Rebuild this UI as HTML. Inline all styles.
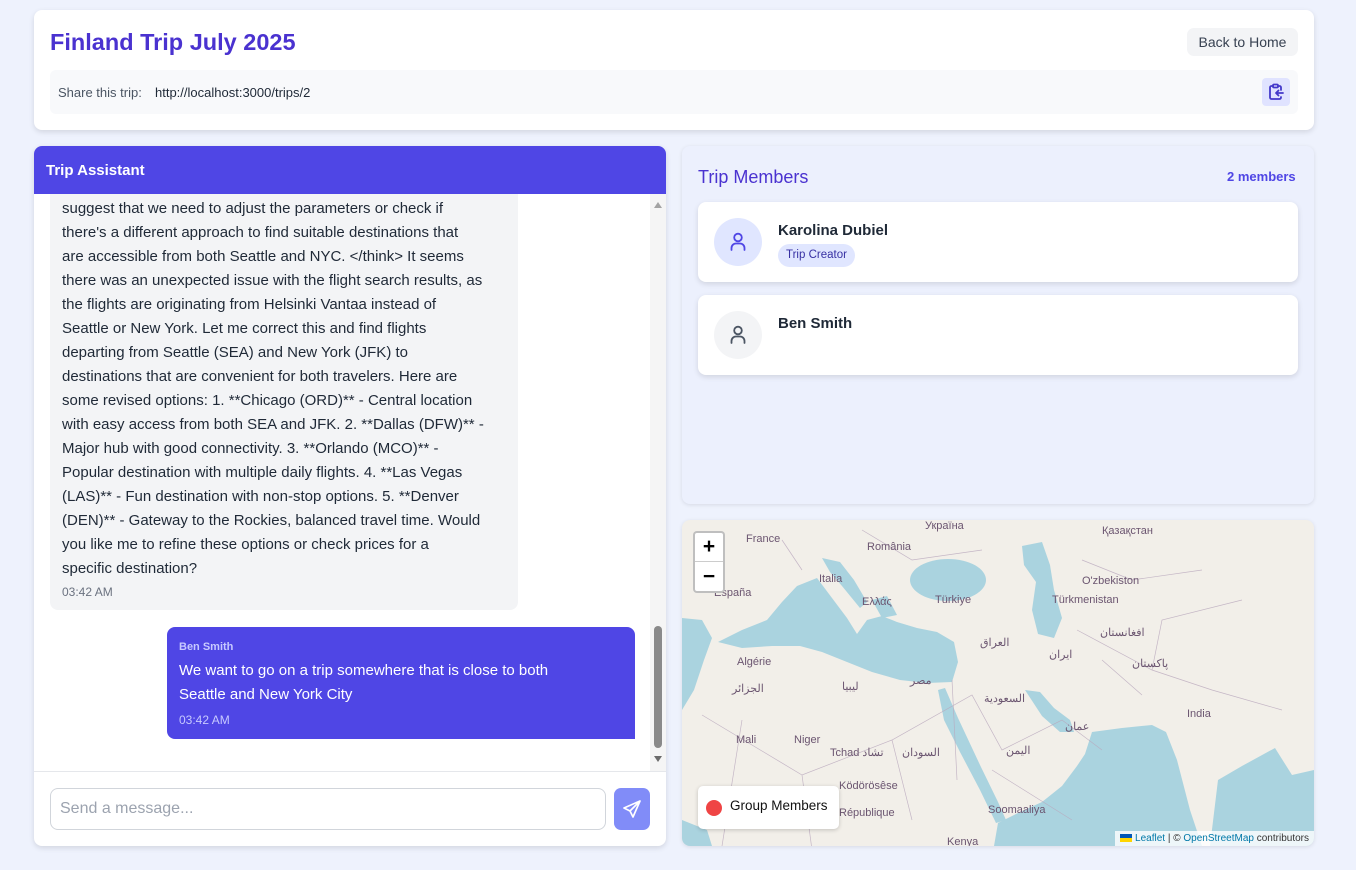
<!DOCTYPE html>
<html><head><meta charset="utf-8"><style>
*{box-sizing:border-box;margin:0;padding:0}
body{width:1356px;height:870px;background:#eef2fd;font-family:"Liberation Sans","Noto Sans CJK SC",sans-serif;position:relative;overflow:hidden;color:#1f2937}
.abs{position:absolute}
.card{background:#fff;border-radius:8px;box-shadow:0 2px 6px rgba(0,0,0,.12)}
.nw{white-space:nowrap}
</style></head><body>
<div class="abs card" style="left:34px;top:10px;width:1280px;height:120px">
  <div class="abs nw" style="left:16px;top:19px;font-size:23.5px;font-weight:bold;color:#4a32d0">Finland Trip July 2025</div>
  <div class="abs nw" style="left:1153px;top:18px;width:111px;height:28px;background:#f3f4f6;border-radius:7px;font-size:14px;color:#374151;line-height:28px;text-align:center">Back to Home</div>
  <div class="abs" style="left:16px;top:60px;width:1248px;height:44px;background:#f8f9fb;border-radius:6px">
    <div class="abs nw" style="left:8px;top:15px;font-size:13px;color:#4b5563">Share this trip:</div>
    <div class="abs nw" style="left:105px;top:15px;font-size:13px;color:#1f2937">http://localhost:3000/trips/2</div>
    <div class="abs" style="left:1212px;top:8px;width:28px;height:28px;background:#e0e3ff;border-radius:4px">
      <svg width="28" height="28" viewBox="0 0 28 28" fill="none" stroke="#4338ca" stroke-width="1.8" stroke-linecap="round" stroke-linejoin="round"><path d="M11 8H9.5A1.5 1.5 0 0 0 8 9.5v10A1.5 1.5 0 0 0 9.5 21h8a1.5 1.5 0 0 0 1.5-1.5V19"/><rect x="11" y="6.5" width="5" height="3" rx="1"/><path d="M16 8h1.5A1.5 1.5 0 0 1 19 9.5V12"/><path d="M21 15h-7m2.5-2.5L14 15l2.5 2.5"/></svg>
    </div>
  </div>
</div>

<div class="abs card" style="left:34px;top:146px;width:632px;height:700px;overflow:hidden">
  <div class="abs" style="left:0;top:0;width:632px;height:48px;background:#4f46e5;color:#fff;font-weight:bold;font-size:15px;padding:16px 12px">Trip Assistant</div>
  <div class="abs" style="left:16px;top:48px;width:468px;height:416px;background:#f3f4f6;border-radius:0 0 8px 8px"></div>
  <div class="abs nw" style="left:28px;top:51px;font-size:15px;line-height:24px;color:#1f2937">suggest that we need to adjust the parameters or check if<br>there's a different approach to find suitable destinations that<br>are accessible from both Seattle and NYC. &lt;/think&gt; It seems<br>there was an unexpected issue with the flight search results, as<br>the flights are originating from Helsinki Vantaa instead of<br>Seattle or New York. Let me correct this and find flights<br>departing from Seattle (SEA) and New York (JFK) to<br>destinations that are convenient for both travelers. Here are<br>some revised options: 1. **Chicago (ORD)** - Central location<br>with easy access from both SEA and JFK. 2. **Dallas (DFW)** -<br>Major hub with good connectivity. 3. **Orlando (MCO)** -<br>Popular destination with multiple daily flights. 4. **Las Vegas<br>(LAS)** - Fun destination with non-stop options. 5. **Denver<br>(DEN)** - Gateway to the Rockies, balanced travel time. Would<br>you like me to refine these options or check prices for a<br>specific destination?</div>
  <div class="abs nw" style="left:28px;top:439px;font-size:12px;color:#6b7280">03:42 AM</div>
  <div class="abs" style="left:133px;top:481px;width:468px;height:112px;background:#4f46e5;border-radius:8px 8px 0 8px;color:#fff">
    <div class="abs nw" style="left:12px;top:14px;font-size:11px;font-weight:bold;color:#c7c9ff">Ben Smith</div>
    <div class="abs nw" style="left:12px;top:32px;font-size:15px;line-height:24px">We want to go on a trip somewhere that is close to both<br>Seattle and New York City</div>
    <div class="abs nw" style="left:12px;top:86px;font-size:12px;color:#c7c9ff">03:42 AM</div>
  </div>
  <div class="abs" style="left:616px;top:48px;width:16px;height:577px;background:#f5f5f5"></div>
  <div class="abs" style="left:620px;top:56px;width:0;height:0;border-left:4px solid transparent;border-right:4px solid transparent;border-bottom:6px solid #a3a3a3"></div>
  <div class="abs" style="left:620px;top:480px;width:8px;height:122px;background:#8a8a8a;border-radius:4px"></div>
  <div class="abs" style="left:620px;top:610px;width:0;height:0;border-left:4px solid transparent;border-right:4px solid transparent;border-top:6px solid #6b6b6b"></div>
  <div class="abs" style="left:0;top:625px;width:632px;height:1px;background:#e5e7eb"></div>
  <div class="abs nw" style="left:16px;top:642px;width:556px;height:42px;border:1px solid #d1d5db;border-radius:8px;font-size:16px;color:#9ca3af;padding:11px 9px">Send a message...</div>
  <div class="abs" style="left:580px;top:642px;width:36px;height:42px;background:#818cf8;border-radius:7px">
    <svg width="36" height="42" viewBox="0 0 36 42" fill="none" stroke="#fff" stroke-width="1.7" stroke-linejoin="round"><path d="M26 13L10 20l6 3 3 6z"/><path d="M26 13L16 23"/></svg>
  </div>
</div>

<div class="abs" style="left:682px;top:146px;width:632px;height:358px;background:#ecf0fd;border-radius:8px;box-shadow:0 1px 4px rgba(0,0,0,.1)">
  <div class="abs nw" style="left:16px;top:21px;font-size:18px;color:#4a32d0">Trip Members</div>
  <div class="abs nw" style="left:545px;top:23px;font-size:13px;font-weight:bold;color:#4f46e5">2 members</div>
  <div class="abs card" style="left:16px;top:56px;width:600px;height:80px">
    <div class="abs" style="left:16px;top:16px;width:48px;height:48px;border-radius:50%;background:#e0e6ff">
      <svg width="48" height="48" viewBox="0 0 48 48" fill="none" stroke="#4f46e5" stroke-width="1.8" stroke-linecap="round"><circle cx="24" cy="19.5" r="3.8"/><path d="M17.5 32v-2a4.5 4.5 0 0 1 4.5-4.5h4a4.5 4.5 0 0 1 4.5 4.5v2"/></svg>
    </div>
    <div class="abs nw" style="left:80px;top:20px;font-size:15px;font-weight:bold;color:#1f2937">Karolina Dubiel</div>
    <div class="abs nw" style="left:80px;top:42px;height:23px;padding:0 8px;line-height:23px;border-radius:12px;background:#e0e6ff;color:#3730a3;font-size:11.5px">Trip Creator</div>
  </div>
  <div class="abs card" style="left:16px;top:149px;width:600px;height:80px">
    <div class="abs" style="left:16px;top:16px;width:48px;height:48px;border-radius:50%;background:#f3f4f6">
      <svg width="48" height="48" viewBox="0 0 48 48" fill="none" stroke="#4b5563" stroke-width="1.8" stroke-linecap="round"><circle cx="24" cy="19.5" r="3.8"/><path d="M17.5 32v-2a4.5 4.5 0 0 1 4.5-4.5h4a4.5 4.5 0 0 1 4.5 4.5v2"/></svg>
    </div>
    <div class="abs nw" style="left:80px;top:20px;font-size:15px;font-weight:bold;color:#1f2937">Ben Smith</div>
  </div>
</div>

<div class="abs" style="left:682px;top:520px;width:632px;height:326px;border-radius:8px;overflow:hidden;background:#f2efe9;box-shadow:0 1px 4px rgba(0,0,0,.1)">
  <svg class="abs" style="left:0;top:0" width="632" height="326" viewBox="0 0 632 326" fill="#aad3df" stroke="none">
    <path d="M0 98L20 100 30 118 22 140 12 170 0 190z"/>
    <path d="M0 300L25 310 30 326 0 326z"/>
    <path d="M36 122L60 110 85 100 100 82 115 66 135 58 150 78 165 98 175 114 185 100 200 96 215 102 235 108 255 112 272 122 276 142 270 162 245 163 218 160 190 152 165 142 140 132 118 126 90 126 60 128z"/>
    <path d="M140 38L158 42 172 60 185 82 178 88 160 66 148 52z"/>
    <path d="M190 80L205 76 215 95 200 98z"/>
    <ellipse cx="266" cy="60" rx="38" ry="21"/>
    <path d="M340 26L360 22 368 45 372 70 380 98 372 118 356 114 350 90 354 62 342 45z"/>
    <path d="M256 170L263 168 276 198 298 245 316 282 324 300 314 303 298 270 278 232 262 200z"/>
    <path d="M343 170L358 172 372 188 388 200 392 212 378 212 360 196z"/>
    <path d="M312 326L316 303 338 292 360 282 380 266 395 246 403 234 410 212 440 208 470 205 484 212 495 240 508 290 520 326z"/>
    <path d="M528 326L536 260 560 246 593 228 610 255 632 250 632 326z"/>
  </svg>
  <svg class="abs" style="left:0;top:0" width="632" height="326" fill="none" stroke="#b9a8bd" stroke-width="0.7" opacity="0.8">
    <path d="M20 195L120 255 210 220 290 175 320 230 380 200 420 230M120 255L130 330M210 220L230 300M60 200L40 326M270 160L275 260M310 250L390 300M395 110L470 150 530 170 600 190M470 150L480 100 560 80M420 140L460 175M100 20L120 50M180 10L230 40 300 30M400 40L450 60 520 50"/>
  </svg>
  <div class="abs" style="font-size:11px;color:#6b5570;left:0;top:0;width:632px;height:326px">
    <span class="abs nw" style="left:64px;top:13px">France</span>
    <span class="abs nw" style="left:185px;top:21px">România</span>
    <span class="abs nw" style="left:243px;top:0px">Україна</span>
    <span class="abs nw" style="left:420px;top:5px">Қазақстан</span>
    <span class="abs nw" style="left:137px;top:53px">Italia</span>
    <span class="abs nw" style="left:32px;top:67px">España</span>
    <span class="abs nw" style="left:180px;top:76px">Ελλάς</span>
    <span class="abs nw" style="left:253px;top:74px">Türkiye</span>
    <span class="abs nw" style="left:400px;top:55px">O'zbekiston</span>
    <span class="abs nw" style="left:370px;top:74px">Türkmenistan</span>
    <span class="abs nw" style="left:418px;top:106px">افغانستان</span>
    <span class="abs nw" style="left:298px;top:116px">العراق</span>
    <span class="abs nw" style="left:367px;top:128px">ایران</span>
    <span class="abs nw" style="left:450px;top:137px">پاکستان</span>
    <span class="abs nw" style="left:55px;top:136px">Algérie</span>
    <span class="abs nw" style="left:50px;top:162px">الجزائر</span>
    <span class="abs nw" style="left:160px;top:160px">ليبيا</span>
    <span class="abs nw" style="left:228px;top:154px">مصر</span>
    <span class="abs nw" style="left:302px;top:172px">السعودية</span>
    <span class="abs nw" style="left:505px;top:188px">India</span>
    <span class="abs nw" style="left:383px;top:200px">عمان</span>
    <span class="abs nw" style="left:54px;top:214px">Mali</span>
    <span class="abs nw" style="left:112px;top:214px">Niger</span>
    <span class="abs nw" style="left:148px;top:226px">Tchad تشاد</span>
    <span class="abs nw" style="left:220px;top:226px">السودان</span>
    <span class="abs nw" style="left:324px;top:224px">اليمن</span>
    <span class="abs nw" style="left:157px;top:260px">Ködörösêse</span>
    <span class="abs nw" style="left:157px;top:287px">République</span>
    <span class="abs nw" style="left:306px;top:284px">Soomaaliya</span>
    <span class="abs nw" style="left:265px;top:316px">Kenya</span>
  </div>
  <div class="abs" style="left:11px;top:11px;width:32px;height:62px;background:#fff;border:2px solid rgba(0,0,0,.25);border-radius:4px">
    <div style="height:29px;border-bottom:1px solid #ccc;text-align:center;font-size:21px;line-height:28px;font-weight:bold;color:#000">+</div>
    <div style="text-align:center;font-size:21px;line-height:29px;font-weight:bold;color:#000">−</div>
  </div>
  <div class="abs" style="left:16px;top:266px;width:141px;height:43px;background:#fff;border-radius:5px;box-shadow:0 1px 4px rgba(0,0,0,.2)">
    <div class="abs" style="left:8px;top:14px;width:16px;height:16px;border-radius:50%;background:#ef4444"></div>
    <div class="abs nw" style="left:32px;top:12px;font-size:13.5px;color:#111">Group Members</div>
  </div>
  <div class="abs nw" style="right:0;bottom:0;background:rgba(255,255,255,.8);font-size:10px;padding:2px 5px;color:#333"><span style="display:inline-block;width:12px;height:8px;background:linear-gradient(#0057b7 50%,#ffd500 50%);vertical-align:-1px"></span> <span style="color:#0078a8">Leaflet</span> | © <span style="color:#0078a8">OpenStreetMap</span> contributors</div>
</div>
</body></html>
